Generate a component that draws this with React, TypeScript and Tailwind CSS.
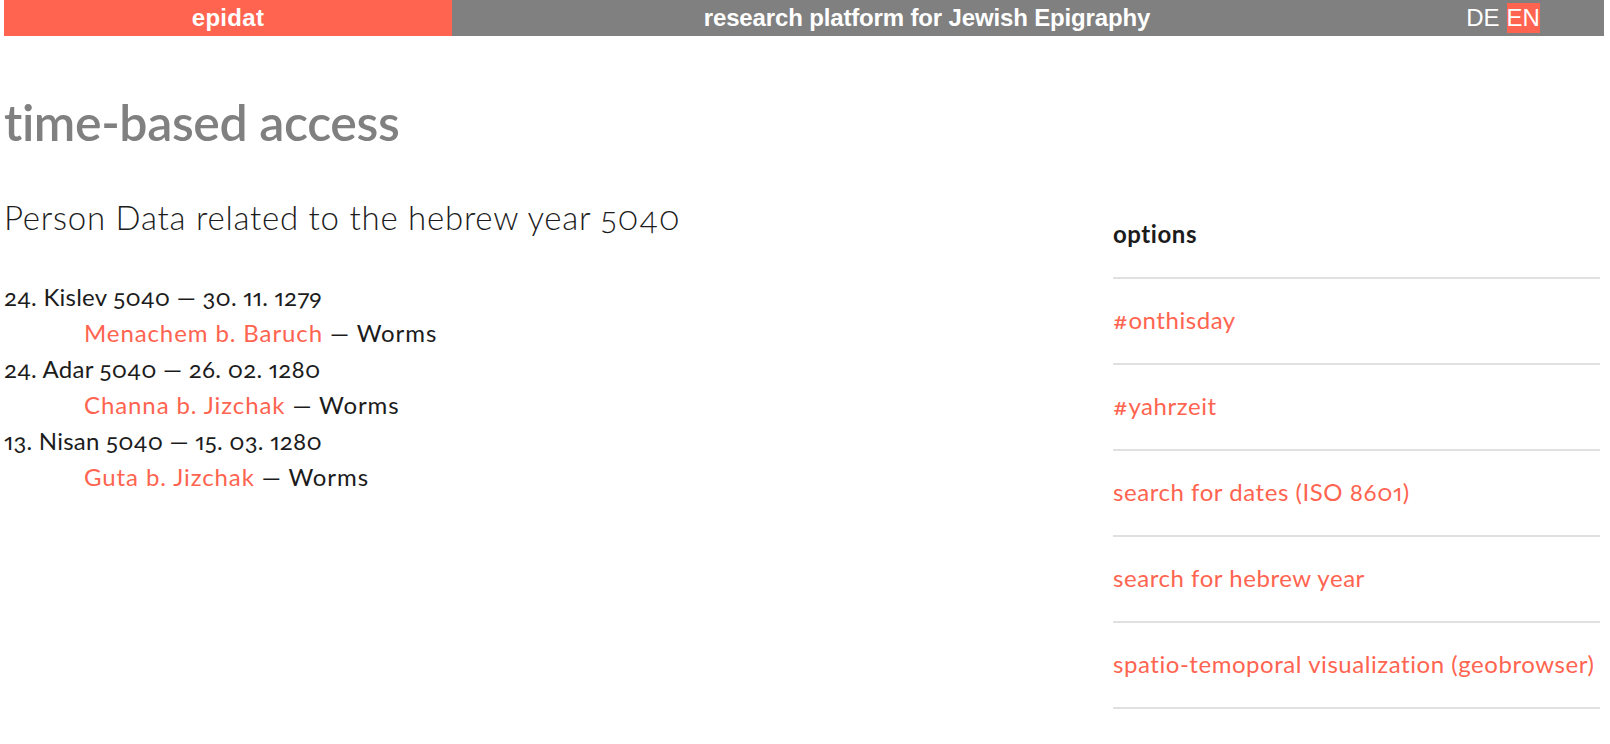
import React from 'react'

const entries = [
  { date: '24. Kislev 5040 — 30. 11. 1279', name: 'Menachem b. Baruch', place: 'Worms' },
  { date: '24. Adar 5040 — 26. 02. 1280', name: 'Channa b. Jizchak', place: 'Worms' },
  { date: '13. Nisan 5040 — 15. 03. 1280', name: 'Guta b. Jizchak', place: 'Worms' },
]

const options = [
  '#onthisday',
  '#yahrzeit',
  'search for dates (ISO 8601)',
  'search for hebrew year',
  'spatio-temoporal visualization (geobrowser)',
]

export default function App() {
  return (
    <div className="min-h-screen bg-white font-['Lato',sans-serif] text-[#1c1c1c] oldstyle-nums proportional-nums">
      {/* top bar */}
      <header className="ml-[4px] flex h-[36px] w-[1600px] font-['Liberation_Sans',Arial,sans-serif] text-white lining-nums">
        <div className="flex w-[448px] items-center justify-center bg-[#ff6450] text-[24px] font-bold tracking-[0.3px]">
          epidat
        </div>
        <div className="flex flex-1 items-center justify-center bg-[#808080] text-[24px] font-bold tracking-[-0.15px]">
          research platform for Jewish Epigraphy
        </div>
        <div className="flex w-[202px] items-center justify-center bg-[#808080] text-[24px]">
          <span>DE</span>
          <span className="ml-[7px] bg-[#ff6450] py-[1px] leading-[28px]">EN</span>
        </div>
      </header>

      <div className="ml-[4px] flex w-[1600px]">
        {/* main column */}
        <main className="flex-1">
          <h1 className="mt-[61px] text-[50px] font-semibold leading-[50px] tracking-[-0.4px] text-[#808080]">
            time-based access
          </h1>
          <h2 className="mt-[54px] text-[33px] font-light leading-[33px] tracking-[0.75px]">
            Person Data related to the hebrew year 5040
          </h2>
          <div className="mt-[45px] text-[24px] leading-[36px]">
            {entries.map((e) => (
              <div key={e.date}>
                <div className="tracking-[0.25px]">{e.date}</div>
                <div className="pl-[80px] tracking-[0.9px]">
                  <a href="#" className="text-[#ff6450]">
                    {e.name}
                  </a>{' '}
                  — {e.place}
                </div>
              </div>
            ))}
          </div>
        </main>

        {/* sidebar */}
        <aside className="mr-[4px] w-[487px] pt-[157px] tracking-[0.55px]">
          <div className="flex h-[86px] items-center border-b-2 border-[#e0e0e0] pb-[2px] text-[24px] font-bold">
            options
          </div>
          {options.map((o) => (
            <a
              key={o}
              href="#"
              className="flex h-[86px] items-center border-b-2 border-[#e0e0e0] pb-[3px] text-[24px] text-[#ff6450]"
            >
              {o}
            </a>
          ))}
        </aside>
      </div>
    </div>
  )
}
